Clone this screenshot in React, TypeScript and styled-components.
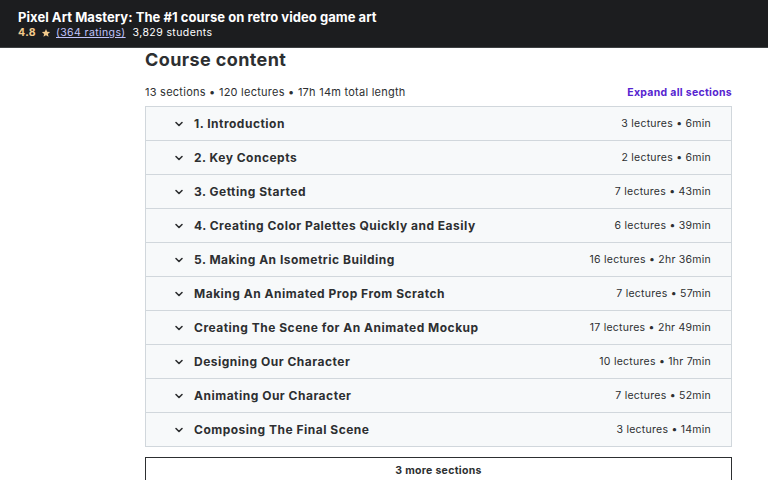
import React from "react";
import styled, { createGlobalStyle } from "styled-components";

const Global = createGlobalStyle`
  html, body { margin: 0; padding: 0; background: #ffffff; }
  body { font-family: Inter, "Liberation Sans", Arial, sans-serif; color: #2d2f31; overflow: hidden; }
  * { box-sizing: border-box; }
`;

const Page = styled.div`
  width: 768px;
  height: 480px;
  display: flex;
  flex-direction: column;
  overflow: hidden;
`;

const Header = styled.header`
  flex: none;
  height: 48px;
  background: #1c1d1f;
  padding: 9px 0 0 18px;
  display: flex;
  flex-direction: column;
  gap: 1px;
  border-bottom: 1px solid #3e4143;
`;

const Title = styled.h1`
  margin: 0;
  font-size: 13px;
  line-height: 16px;
  font-weight: 700;
  color: #ffffff;
  letter-spacing: 0.05px;
`;

const RatingRow = styled.div`
  display: flex;
  align-items: center;
  gap: 5px;
  font-size: 10.5px;
  line-height: 14px;
  letter-spacing: 0.4px;
  color: #ffffff;
`;

const Score = styled.span`
  color: #f3ca8c;
  font-weight: 700;
`;

const RatingsLink = styled.span`
  color: #c0c4fc;
  text-decoration: underline;
  margin-right: 2px;
`;

const Main = styled.main`
  flex: 1;
  padding: 0 0 0 145px;
  display: flex;
  flex-direction: column;
  width: 732px;
`;

const Heading = styled.h2`
  margin: 0;
  font-size: 18px;
  line-height: 24px;
  font-weight: 700;
  letter-spacing: 0.4px;
  color: #2d2f31;
`;

const MetaRow = styled.div`
  display: flex;
  justify-content: space-between;
  align-items: center;
  margin-top: 10px;
  height: 20px;
  font-size: 11px;
  letter-spacing: 0.25px;
  color: #2d2f31;
`;

const ExpandLink = styled.span`
  color: #5624d0;
  font-weight: 700;
  font-size: 10.5px;
  letter-spacing: 0.3px;
`;

const Table = styled.div`
  margin-top: 4px;
  width: 587px;
  border: 1px solid #d1d7dc;
  border-bottom: none;
  display: flex;
  flex-direction: column;
`;

const Row = styled.div`
  height: 34px;
  background: #f7f9fa;
  border-bottom: 1px solid #d1d7dc;
  display: flex;
  align-items: center;
  padding: 0 20px 0 28px;
`;

const Chevron = styled.svg`
  width: 10px;
  height: 10px;
  flex: none;
  margin-right: 10px;
`;

const RowTitle = styled.span`
  flex: 1;
  font-size: 12px;
  font-weight: 700;
  letter-spacing: 0.5px;
  color: #2d2f31;
`;

const RowMeta = styled.span`
  font-size: 10.5px;
  letter-spacing: 0.25px;
  color: #2d2f31;
`;

const MoreButton = styled.button`
  margin-top: 10px;
  width: 587px;
  height: 34px;
  flex: none;
  border: 1px solid #2d2f31;
  background: #ffffff;
  font-family: inherit;
  font-size: 10.5px;
  font-weight: 700;
  letter-spacing: 0.3px;
  color: #2d2f31;
  display: flex;
  justify-content: center;
  padding-top: 6px;
`;

const Star = () => (
  <svg width="10" height="10" viewBox="0 0 24 24">
    <path
      fill="#f3ca8c"
      d="M12 2.5l2.9 6.3 6.9.7-5.2 4.6 1.5 6.8L12 17.4 5.9 20.9l1.5-6.8-5.2-4.6 6.9-.7z"
    />
  </svg>
);

const sections: [string, string][] = [
  ["1. Introduction", "3 lectures • 6min"],
  ["2. Key Concepts", "2 lectures • 6min"],
  ["3. Getting Started", "7 lectures • 43min"],
  ["4. Creating Color Palettes Quickly and Easily", "6 lectures • 39min"],
  ["5. Making An Isometric Building", "16 lectures • 2hr 36min"],
  ["Making An Animated Prop From Scratch", "7 lectures • 57min"],
  ["Creating The Scene for An Animated Mockup", "17 lectures • 2hr 49min"],
  ["Designing Our Character", "10 lectures • 1hr 7min"],
  ["Animating Our Character", "7 lectures • 52min"],
  ["Composing The Final Scene", "3 lectures • 14min"],
];

export default function App() {
  return (
    <Page>
      <Global />
      <Header>
        <Title>Pixel Art Mastery: The #1 course on retro video game art</Title>
        <RatingRow>
          <Score>4.8</Score>
          <Star />
          <RatingsLink>(364 ratings)</RatingsLink>
          <span>3,829 students</span>
        </RatingRow>
      </Header>
      <Main>
        <Heading>Course content</Heading>
        <MetaRow>
          <span>13 sections • 120 lectures • 17h 14m total length</span>
          <ExpandLink>Expand all sections</ExpandLink>
        </MetaRow>
        <Table>
          {sections.map(([t, m]) => (
            <Row key={t}>
              <Chevron viewBox="0 0 10 10">
                <path d="M2 3.5l3 3 3-3" fill="none" stroke="#2d2f31" strokeWidth="1.6" strokeLinecap="round" strokeLinejoin="round" />
              </Chevron>
              <RowTitle>{t}</RowTitle>
              <RowMeta>{m}</RowMeta>
            </Row>
          ))}
        </Table>
        <MoreButton>3 more sections</MoreButton>
      </Main>
    </Page>
  );
}
